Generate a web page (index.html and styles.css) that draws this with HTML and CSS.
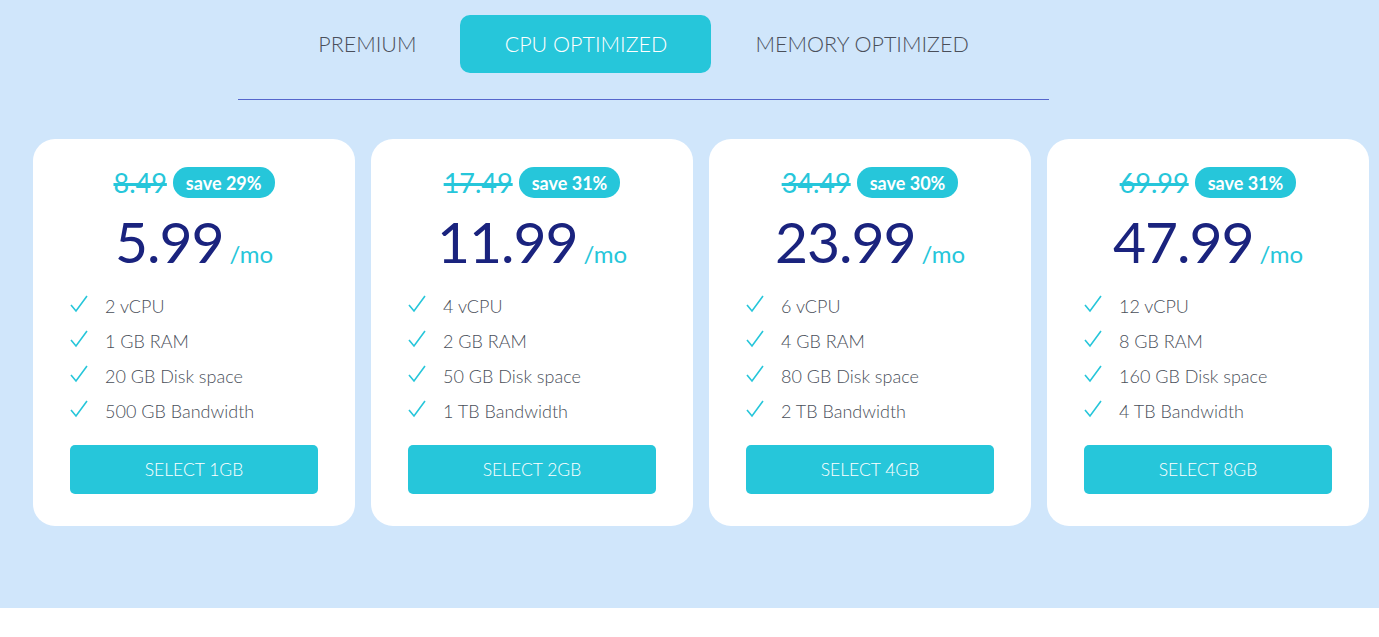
FILE: index.html
```html
<!DOCTYPE html>
<html>
<head>
<meta charset="utf-8">
<link rel="stylesheet" href="styles.css">
</head>
<body>
<div class="page">
  <div class="tabs-wrap">
    <div class="tabs">
      <div class="tab">PREMIUM</div>
      <div class="tab active">CPU OPTIMIZED</div>
      <div class="tab">MEMORY OPTIMIZED</div>
    </div>
  </div>
  <div class="cards">
    <div class="card">
      <div class="old-row"><span class="old">8.49</span><span class="badge">save 29%</span></div>
      <div class="price-row"><span class="price">5.99</span><span class="per">/mo</span></div>
      <ul class="features">
        <li><svg class="check" viewBox="0 0 18 18"><polyline points="1,10 6,16 17,1"/></svg>2 vCPU</li>
        <li><svg class="check" viewBox="0 0 18 18"><polyline points="1,10 6,16 17,1"/></svg>1 GB RAM</li>
        <li><svg class="check" viewBox="0 0 18 18"><polyline points="1,10 6,16 17,1"/></svg>20 GB Disk space</li>
        <li><svg class="check" viewBox="0 0 18 18"><polyline points="1,10 6,16 17,1"/></svg>500 GB Bandwidth</li>
      </ul>
      <div class="btn">SELECT 1GB</div>
    </div>
    <div class="card">
      <div class="old-row"><span class="old">17.49</span><span class="badge">save 31%</span></div>
      <div class="price-row"><span class="price">11.99</span><span class="per">/mo</span></div>
      <ul class="features">
        <li><svg class="check" viewBox="0 0 18 18"><polyline points="1,10 6,16 17,1"/></svg>4 vCPU</li>
        <li><svg class="check" viewBox="0 0 18 18"><polyline points="1,10 6,16 17,1"/></svg>2 GB RAM</li>
        <li><svg class="check" viewBox="0 0 18 18"><polyline points="1,10 6,16 17,1"/></svg>50 GB Disk space</li>
        <li><svg class="check" viewBox="0 0 18 18"><polyline points="1,10 6,16 17,1"/></svg>1 TB Bandwidth</li>
      </ul>
      <div class="btn">SELECT 2GB</div>
    </div>
    <div class="card">
      <div class="old-row"><span class="old">34.49</span><span class="badge">save 30%</span></div>
      <div class="price-row"><span class="price">23.99</span><span class="per">/mo</span></div>
      <ul class="features">
        <li><svg class="check" viewBox="0 0 18 18"><polyline points="1,10 6,16 17,1"/></svg>6 vCPU</li>
        <li><svg class="check" viewBox="0 0 18 18"><polyline points="1,10 6,16 17,1"/></svg>4 GB RAM</li>
        <li><svg class="check" viewBox="0 0 18 18"><polyline points="1,10 6,16 17,1"/></svg>80 GB Disk space</li>
        <li><svg class="check" viewBox="0 0 18 18"><polyline points="1,10 6,16 17,1"/></svg>2 TB Bandwidth</li>
      </ul>
      <div class="btn">SELECT 4GB</div>
    </div>
    <div class="card">
      <div class="old-row"><span class="old">69.99</span><span class="badge">save 31%</span></div>
      <div class="price-row"><span class="price">47.99</span><span class="per">/mo</span></div>
      <ul class="features">
        <li><svg class="check" viewBox="0 0 18 18"><polyline points="1,10 6,16 17,1"/></svg>12 vCPU</li>
        <li><svg class="check" viewBox="0 0 18 18"><polyline points="1,10 6,16 17,1"/></svg>8 GB RAM</li>
        <li><svg class="check" viewBox="0 0 18 18"><polyline points="1,10 6,16 17,1"/></svg>160 GB Disk space</li>
        <li><svg class="check" viewBox="0 0 18 18"><polyline points="1,10 6,16 17,1"/></svg>4 TB Bandwidth</li>
      </ul>
      <div class="btn">SELECT 8GB</div>
    </div>
  </div>
</div>
</body>
</html>
```
FILE: styles.css
```css
* { box-sizing: border-box; }
body {
  margin: 0;
  background: #ffffff;
  font-family: "Lato", "Open Sans", sans-serif;
}
.page {
  background: #d0e6fb;
  height: 608px;
  padding-top: 15px;
}
.tabs-wrap {
  margin-left: 238px;
  width: 811px;
  border-bottom: 1px solid #5566cc;
  padding-bottom: 26px;
}
.tabs {
  display: flex;
  justify-content: center;
}
.tab {
  height: 58px;
  padding: 0 44px;
  display: flex;
  align-items: center;
  font-size: 21.5px;
  font-weight: 300;
  color: #4a4f5a;
  border-radius: 10px;
}
.tab.active {
  background: #26c6da;
  color: #ffffff;
  width: 251px;
  justify-content: center;
}
.cards {
  display: flex;
  gap: 16px;
  padding-left: 33px;
  margin-top: 39px;
}
.card {
  width: 322px;
  height: 387px;
  background: #ffffff;
  border-radius: 22px;
  padding: 28px 37px 0;
}
.old-row {
  display: flex;
  justify-content: center;
  align-items: center;
  gap: 6px;
  height: 31px;
}
.old {
  font-size: 27px;
  color: #26c6da;
  text-decoration: line-through;
  text-decoration-thickness: 3px;
}
.badge {
  background: #26c6da;
  color: #ffffff;
  font-weight: 700;
  font-size: 18px;
  height: 31px;
  padding: 0 13px;
  border-radius: 15px;
  display: flex;
  align-items: center;
}
.price-row {
  display: flex;
  justify-content: center;
  align-items: baseline;
  gap: 6px;
  height: 90px;
  padding-top: 10px;
}
.price {
  font-size: 57px;
  color: #1a237e;
  letter-spacing: -1px;
  line-height: 66px;
}
.per {
  font-size: 24px;
  color: #26c6da;
}
.features {
  list-style: none;
  margin: 0;
  padding: 0;
}
.features li {
  height: 35px;
  display: flex;
  align-items: center;
  font-size: 18px;
  font-weight: 300;
  color: #4a4f5a;
}
.check {
  width: 18px;
  height: 18px;
  margin-right: 17px;
  margin-top: -4px;
  fill: none;
  stroke: #26c6da;
  stroke-width: 1.6;
}
.btn {
  margin-top: 17px;
  height: 49px;
  background: #26c6da;
  color: #ffffff;
  border-radius: 5px;
  display: flex;
  align-items: center;
  justify-content: center;
  font-size: 17.5px;
  font-weight: 300;
}
```
